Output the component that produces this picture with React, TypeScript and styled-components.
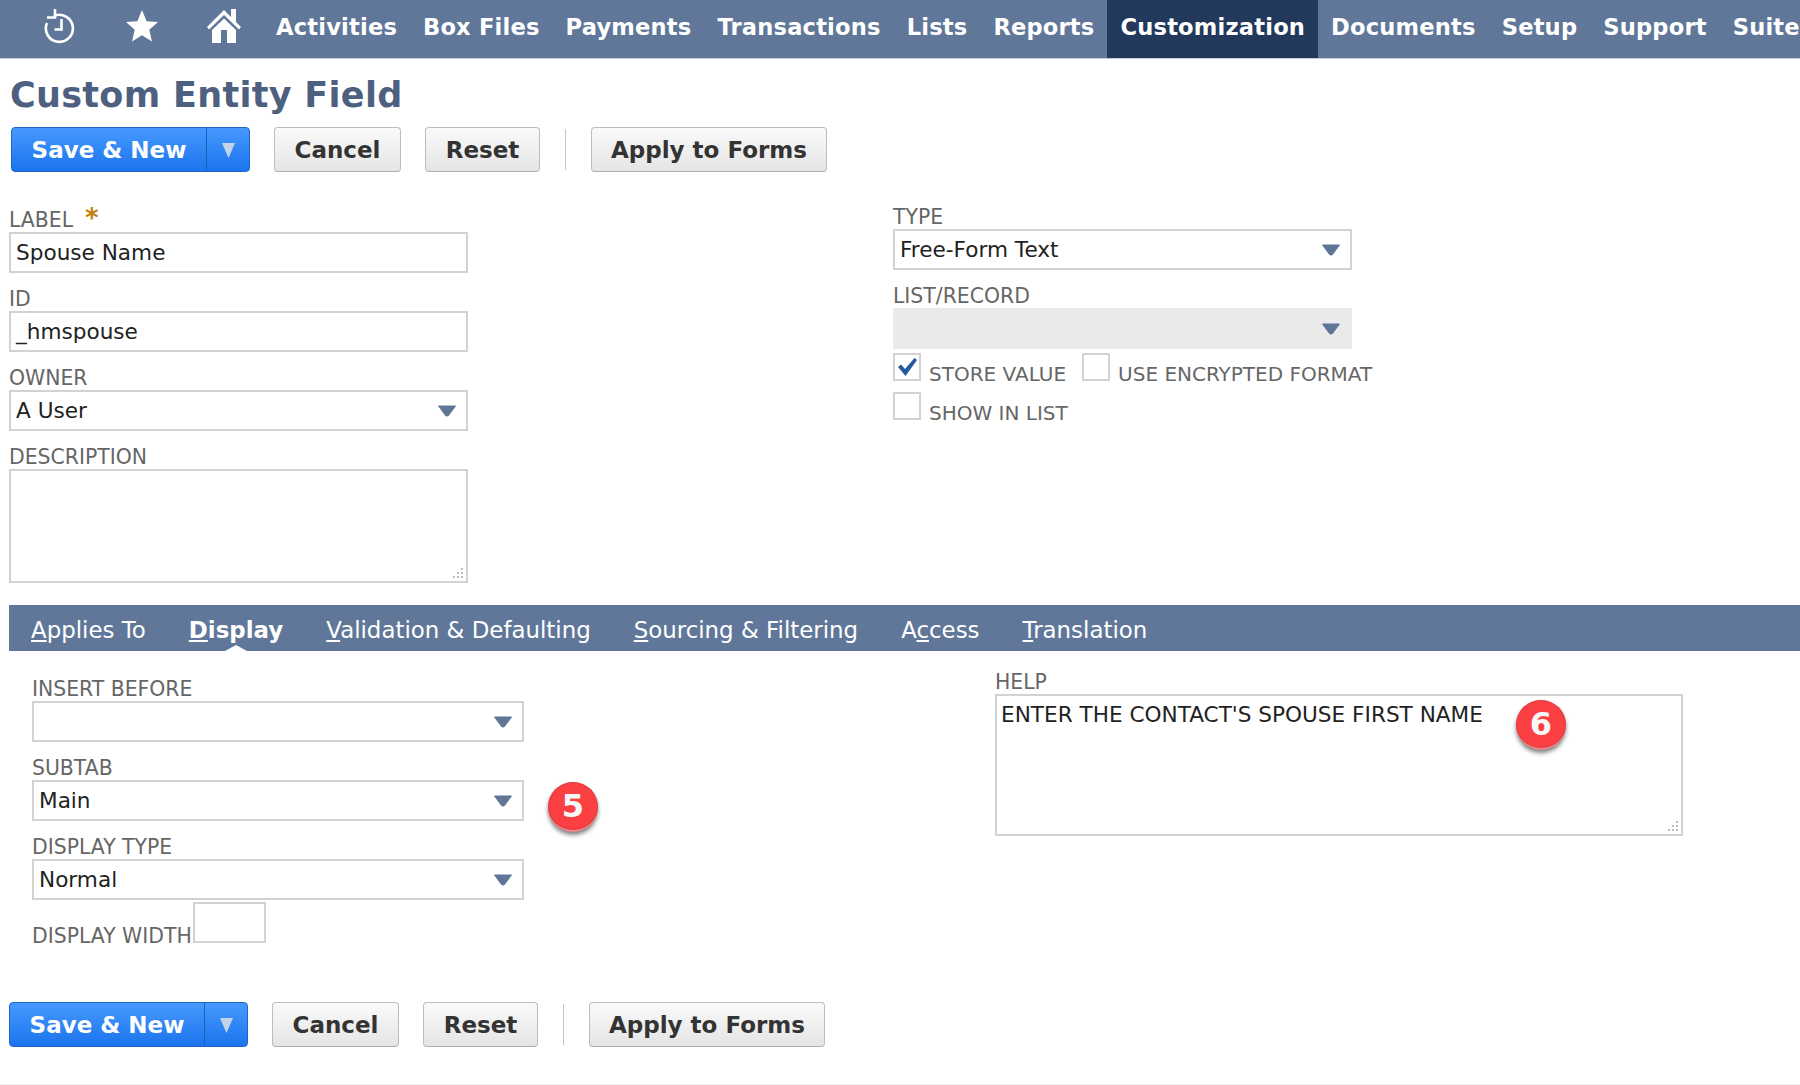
import styled, { createGlobalStyle } from 'styled-components'

const GlobalStyle = createGlobalStyle`
  html, body {
    margin: 0;
    padding: 0;
    background: #ffffff;
    overflow: hidden;
  }
  * {
    box-sizing: border-box;
  }
`

const Page = styled.div`
  width: 1800px;
  height: 1085px;
  overflow: hidden;
  font-family: 'DejaVu Sans', Verdana, sans-serif;
  border-bottom: 1px solid #f0f0f0;
`

const NavBar = styled.div`
  display: flex;
  align-items: stretch;
  height: 59px;
  padding-left: 40px;
  background: #607799;
  border-bottom: 1px solid #c5ccd8;
  overflow: hidden;
  white-space: nowrap;
`

const NavIcon = styled.div<{ $gap: number }>`
  display: flex;
  align-items: center;
  justify-content: center;
  flex: none;
  width: 40px;
  margin-right: ${(p) => p.$gap}px;
  padding-bottom: 6px;
`

const NavItem = styled.div<{ $active?: boolean }>`
  display: flex;
  align-items: center;
  flex: none;
  padding: 0 13px 5px;
  font-size: 22.6px;
  font-weight: 700;
  letter-spacing: 0.18px;
  color: #ffffff;
  background: ${(p) => (p.$active ? '#23395b' : 'transparent')};
`

const Content = styled.div`
  padding: 0 0 0 9px;
`

const Title = styled.h1`
  margin: 0 0 0 1px;
  height: 68px;
  padding-top: 14px;
  font-size: 35px;
  line-height: 44px;
  font-weight: 700;
  letter-spacing: 0.3px;
  color: #4d6080;
`

const Toolbar = styled.div<{ $shift?: number; $top?: number }>`
  display: flex;
  align-items: center;
  height: 45px;
  margin-top: ${(p) => p.$top ?? 0}px;
  margin-left: ${(p) => p.$shift ?? 0}px;
`

const SplitButton = styled.div`
  display: flex;
  width: 239px;
  height: 45px;
  margin-right: 24px;
  padding-top: 1px;
  border: 1px solid #1e66c4;
  border-radius: 4px;
  background: linear-gradient(#4799fe, #1b74ee);
  color: #ffffff;
  font-size: 23px;
  font-weight: 700;
`

const SplitLabel = styled.div`
  display: flex;
  align-items: center;
  justify-content: center;
  width: 195px;
  margin-top: -1px;
  padding-top: 1px;
  border-right: 1px solid #1a5fb8;
`

const SplitArrow = styled.div`
  display: flex;
  align-items: center;
  justify-content: center;
  flex: 1;
`

const Button = styled.div<{ $width: number; $gap?: number }>`
  display: flex;
  align-items: center;
  justify-content: center;
  width: ${(p) => p.$width}px;
  height: 45px;
  margin-right: ${(p) => p.$gap ?? 24}px;
  padding-top: 1px;
  border: 1px solid #bdbdbd;
  border-bottom-color: #aeaeae;
  border-radius: 4px;
  background: linear-gradient(#fafafa, #e5e5e5);
  color: #333333;
  font-size: 23px;
  font-weight: 700;
`

const Separator = styled.div`
  width: 1px;
  height: 41px;
  margin-right: 25px;
  background: #c4c4c4;
`

const FormTop = styled.div`
  display: flex;
  height: 433px;
`

const LeftColumn = styled.div`
  width: 884px;
  padding-top: 36px;
`

const RightColumn = styled.div`
  padding-top: 33px;
`

const Field = styled.div<{ $width: number }>`
  display: flex;
  flex-direction: column;
  width: ${(p) => p.$width}px;
  margin-bottom: 14px;
`

const Label = styled.div`
  height: 24px;
  font-size: 20.4px;
  line-height: 24px;
  color: #666666;
  white-space: nowrap;
`

const Required = styled.span`
  margin-left: 12px;
  color: #c57f0c;
  font-size: 26px;
  font-weight: 700;
  line-height: 18px;
`

const Control = styled.div<{ $disabled?: boolean; $height?: number }>`
  position: relative;
  display: flex;
  align-items: ${(p) => (p.$height ? 'flex-start' : 'center')};
  justify-content: space-between;
  height: ${(p) => p.$height ?? 41}px;
  padding: ${(p) => (p.$height ? '5px 4px' : '0 9px 0 5px')};
  border: 2px solid ${(p) => (p.$disabled ? '#eaeaea' : '#d2d2d2')};
  background: ${(p) => (p.$disabled ? '#eaeaea' : '#ffffff')};
  font-size: 21.6px;
  line-height: 27px;
  color: #222222;
  white-space: nowrap;
`

const Grip = styled.svg`
  position: absolute;
  right: 2px;
  bottom: 2px;
`

const CheckRow = styled.div`
  display: flex;
  align-items: flex-start;
  height: 39px;
  margin-top: -10px;
  margin-bottom: 10px;
`

const CheckBox = styled.div`
  display: flex;
  align-items: center;
  justify-content: center;
  flex: none;
  width: 28px;
  height: 28px;
  border: 2px solid #d2d2d2;
`

const CheckLabel = styled.div`
  margin: 9px 16px 0 8px;
  font-size: 20px;
  line-height: 24px;
  color: #666666;
`

const TabBar = styled.div`
  display: flex;
  gap: 43px;
  height: 46px;
  padding: 0 22px;
  background: #607799;
  color: #ffffff;
`

const Tab = styled.div<{ $active?: boolean }>`
  position: relative;
  display: flex;
  align-items: center;
  padding-top: 4px;
  font-size: 22.9px;
  font-weight: ${(p) => (p.$active ? 700 : 400)};
  white-space: nowrap;
  ${(p) =>
    p.$active &&
    `&::after {
      content: '';
      position: absolute;
      left: 50%;
      bottom: 0;
      margin-left: -11px;
      border-left: 11px solid transparent;
      border-right: 11px solid transparent;
      border-bottom: 6px solid #ffffff;
    }`}
`

const TabBody = styled.div`
  display: flex;
  height: 351px;
  padding-top: 26px;
`

const DetailLeft = styled.div`
  width: 986px;
  padding-left: 23px;
`

const DetailRight = styled.div`
  position: relative;
  margin-top: -7px;
`

const SubtabRow = styled.div`
  position: relative;
`

const WidthRow = styled.div`
  display: flex;
  align-items: flex-end;
  margin-top: -12px;
`

const WidthLabel = styled(Label)`
  margin-bottom: -5px;
`

const WidthBox = styled.div`
  width: 73px;
  height: 41px;
  margin-left: 1px;
  border: 2px solid #d2d2d2;
`

const Badge = styled.div<{ $left: number; $top: number }>`
  position: absolute;
  left: ${(p) => p.$left}px;
  top: ${(p) => p.$top}px;
  display: flex;
  align-items: center;
  justify-content: center;
  width: 50px;
  height: 50px;
  border-radius: 50%;
  background: #fb4044;
  border-bottom: 2px solid #e9878a;
  box-shadow: 0 3px 4px rgba(0, 0, 0, 0.5), inset 0 0 2px #b82a2e;
  color: #f8f8f8;
  font-size: 32px;
  font-weight: 700;
`

const navItems = ['Activities', 'Box Files', 'Payments', 'Transactions', 'Lists', 'Reports', 'Customization', 'Documents', 'Setup', 'Support', 'SuiteApps']

const Arrow = () => (
  <svg width="20" height="12" viewBox="0 0 20 12">
    <path d="M1.5 1h17l-7 9.5q-1.5 1.2-3 0z" fill="#5f7697" stroke="#5f7697" strokeLinejoin="round" />
  </svg>
)

const ResizeGrip = () => (
  <Grip width="11" height="11" viewBox="0 0 11 11" fill="#bdbdbd">
    <rect x="8" y="0" width="2" height="2" />
    <rect x="4" y="4" width="2" height="2" />
    <rect x="8" y="4" width="2" height="2" />
    <rect x="0" y="8" width="2" height="2" />
    <rect x="4" y="8" width="2" height="2" />
    <rect x="8" y="8" width="2" height="2" />
  </Grip>
)

const ButtonRow = ({ shift, top }: { shift?: number; top?: number }) => (
  <Toolbar $shift={shift} $top={top}>
    <SplitButton>
      <SplitLabel>Save &amp; New</SplitLabel>
      <SplitArrow>
        <svg width="13" height="15" viewBox="0 0 13 15">
          <path d="M0 0h13L6.5 15z" fill="#c4d4e8" />
        </svg>
      </SplitArrow>
    </SplitButton>
    <Button $width={127}>Cancel</Button>
    <Button $width={115} $gap={25}>Reset</Button>
    <Separator />
    <Button $width={236}>Apply to Forms</Button>
  </Toolbar>
)

export default function App() {
  return (
    <Page>
      <GlobalStyle />
      <NavBar>
        <NavIcon $gap={42}>
          <svg width="34" height="36" viewBox="0 0 34 36" fill="none" stroke="#ffffff" strokeWidth="2.6">
            <path d="M11 8a13.5 13.5 0 1 1-7 7" />
            <path d="M12 1v8.500H4" />
            <path d="M18.500 11v10.500h-7" />
          </svg>
        </NavIcon>
        <NavIcon $gap={42}>
          <svg width="34" height="34" viewBox="0 0 34 34" fill="#ffffff">
            <path d="M17 1l4.600 11.200 11.400.9-8.700 7.600 2.700 11.800L17 26.200 7 32.500l2.700-11.800L1 13.100l11.400-.9z" />
          </svg>
        </NavIcon>
        <NavIcon $gap={19}>
          <svg width="36" height="36" viewBox="0 0 36 36">
            <path fill="#ffffff" d="M18 2L1 19l2 2.500L18 7l15 14.500 2-2.500-5-5V1h-5v8z" />
            <path fill="#ffffff" fillRule="evenodd" d="M18 10.500L6 22v13h24V22zM15 22h6v13h-6z" />
          </svg>
        </NavIcon>
        {navItems.map((item) => (
          <NavItem key={item} $active={item === 'Customization'}>{item}</NavItem>
        ))}
      </NavBar>
      <Content>
        <Title>Custom Entity Field</Title>
        <ButtonRow shift={2} />
        <FormTop>
          <LeftColumn>
            <Field $width={459}>
              <Label>LABEL<Required>*</Required></Label>
              <Control>Spouse Name</Control>
            </Field>
            <Field $width={459}>
              <Label>ID</Label>
              <Control>_hmspouse</Control>
            </Field>
            <Field $width={459}>
              <Label>OWNER</Label>
              <Control>A User<Arrow /></Control>
            </Field>
            <Field $width={459}>
              <Label>DESCRIPTION</Label>
              <Control $height={114}><ResizeGrip /></Control>
            </Field>
          </LeftColumn>
          <RightColumn>
            <Field $width={459}>
              <Label>TYPE</Label>
              <Control>Free-Form Text<Arrow /></Control>
            </Field>
            <Field $width={459}>
              <Label>LIST/RECORD</Label>
              <Control $disabled><span /><Arrow /></Control>
            </Field>
            <CheckRow>
              <CheckBox>
                <svg width="22" height="20" viewBox="0 0 22 20">
                  <path d="M2 10l3-2.500 4 4.500L18.500 1 21 3 9.500 19z" fill="#23589f" />
                </svg>
              </CheckBox>
              <CheckLabel>STORE VALUE</CheckLabel>
              <CheckBox />
              <CheckLabel>USE ENCRYPTED FORMAT</CheckLabel>
            </CheckRow>
            <CheckRow>
              <CheckBox />
              <CheckLabel>SHOW IN LIST</CheckLabel>
            </CheckRow>
          </RightColumn>
        </FormTop>
        <TabBar>
          <Tab><span><u>A</u>pplies To</span></Tab>
          <Tab $active><span><u>D</u>isplay</span></Tab>
          <Tab><span><u>V</u>alidation &amp; Defaulting</span></Tab>
          <Tab><span><u>S</u>ourcing &amp; Filtering</span></Tab>
          <Tab><span>A<u>c</u>cess</span></Tab>
          <Tab><span><u>T</u>ranslation</span></Tab>
        </TabBar>
        <TabBody>
          <DetailLeft>
            <Field $width={492}>
              <Label>INSERT BEFORE</Label>
              <Control><span /><Arrow /></Control>
            </Field>
            <SubtabRow>
              <Field $width={492}>
                <Label>SUBTAB</Label>
                <Control>Main<Arrow /></Control>
              </Field>
              <Badge $left={516} $top={26}>5</Badge>
            </SubtabRow>
            <Field $width={492}>
              <Label>DISPLAY TYPE</Label>
              <Control>Normal<Arrow /></Control>
            </Field>
            <WidthRow>
              <WidthLabel>DISPLAY WIDTH</WidthLabel>
              <WidthBox />
            </WidthRow>
          </DetailLeft>
          <DetailRight>
            <Field $width={688}>
              <Label>HELP</Label>
              <Control $height={142}>ENTER THE CONTACT'S SPOUSE FIRST NAME<ResizeGrip /></Control>
            </Field>
            <Badge $left={521} $top={30}>6</Badge>
          </DetailRight>
        </TabBody>
        <ButtonRow />
      </Content>
    </Page>
  )
}
